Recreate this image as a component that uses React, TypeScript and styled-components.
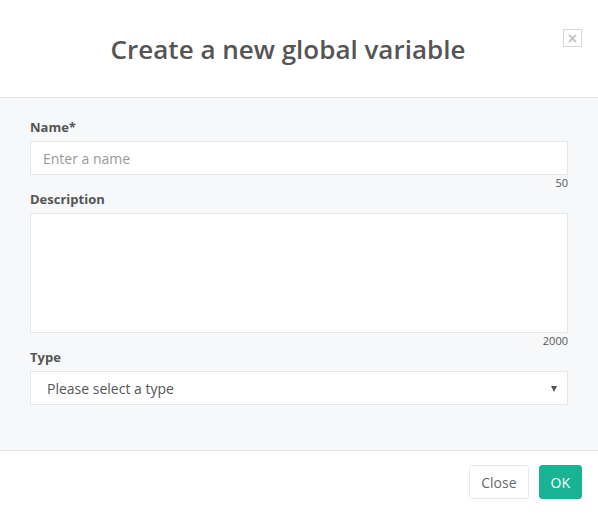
import styled, { createGlobalStyle } from "styled-components"

const Global = createGlobalStyle`
  html, body {
    margin: 0;
    padding: 0;
    background: #ffffff;
  }
  body {
    font-family: "Open Sans", "Liberation Sans", sans-serif;
    color: #555555;
  }
  * { box-sizing: border-box; }
`

const Modal = styled.div`
  width: 598px;
  height: 515px;
  display: flex;
  flex-direction: column;
  background: #fff;
`

const Header = styled.header`
  height: 98px;
  flex: none;
  border-bottom: 1px solid #e5e5e5;
  display: flex;
  align-items: center;
  justify-content: center;
  padding-right: 22px;
  position: relative;
`

const Title = styled.h1`
  margin: 0;
  font-size: 26px;
  font-weight: 600;
  color: #555555;
`

const CloseIcon = styled.button`
  position: absolute;
  top: 29px;
  right: 16px;
  width: 19px;
  height: 18px;
  padding: 0;
  border: 1px solid #d6d6d6;
  background: #fff;
  display: flex;
  align-items: center;
  justify-content: center;
  cursor: pointer;
`

const Body = styled.div`
  flex: 1;
  background: #f7f8fa;
  padding: 20px 30px 0;
  display: flex;
  flex-direction: column;
`

const Label = styled.label`
  display: block;
  font-size: 13px;
  font-weight: 700;
  line-height: 18px;
  color: #555555;
  margin-bottom: 5px;
`

const fieldBase = `
  width: 100%;
  border: 1px solid #e5e6e7;
  background: #fff;
  font-family: "Open Sans", "Liberation Sans", sans-serif;
  font-size: 14px;
  color: #555;
  outline: none;
`

const Input = styled.input`
  ${fieldBase}
  height: 34px;
  padding: 0 12px;
  &::placeholder { color: #999999; }
`

const TextArea = styled.textarea`
  ${fieldBase}
  height: 120px;
  padding: 6px 12px;
  resize: none;
  display: block;
`

const Counter = styled.div`
  text-align: right;
  font-size: 11px;
  line-height: 15px;
  color: #555555;
`

const SelectBox = styled.div`
  ${fieldBase}
  height: 34px;
  padding: 0 10px 0 16px;
  display: flex;
  align-items: center;
  justify-content: space-between;
`

const Arrow = styled.span`
  width: 0;
  height: 0;
  border-left: 3.5px solid transparent;
  border-right: 3.5px solid transparent;
  border-top: 6px solid #555;
  margin-top: 2px;
`

const Footer = styled.footer`
  height: 65px;
  flex: none;
  border-top: 1px solid #e5e5e5;
  display: flex;
  align-items: flex-start;
  justify-content: flex-end;
  gap: 10px;
  padding: 14px 16px 0 0;
`

const Button = styled.button<{ $primary?: boolean }>`
  height: 34px;
  padding: 0 11px;
  border-radius: 3px;
  font-family: "Open Sans", "Liberation Sans", sans-serif;
  font-size: 14px;
  cursor: pointer;
  border: 1px solid ${p => (p.$primary ? "#1ab394" : "#e7eaec")};
  background: ${p => (p.$primary ? "#1ab394" : "#fff")};
  color: ${p => (p.$primary ? "#fff" : "#676a6c")};
`

export default function App() {
  return (
    <Modal>
      <Global />
      <Header>
        <Title>Create a new global variable</Title>
        <CloseIcon aria-label="close">
          <svg width="9" height="9" viewBox="0 0 9 9">
            <path d="M1 1L8 8M8 1L1 8" stroke="#c4c4c4" strokeWidth="1.8" />
          </svg>
        </CloseIcon>
      </Header>
      <Body>
        <Label>Name*</Label>
        <Input placeholder="Enter a name" />
        <Counter>50</Counter>
        <Label>Description</Label>
        <TextArea />
        <Counter>2000</Counter>
        <Label>Type</Label>
        <SelectBox>
          <span>Please select a type</span>
          <Arrow />
        </SelectBox>
      </Body>
      <Footer>
        <Button>Close</Button>
        <Button $primary>OK</Button>
      </Footer>
    </Modal>
  )
}
